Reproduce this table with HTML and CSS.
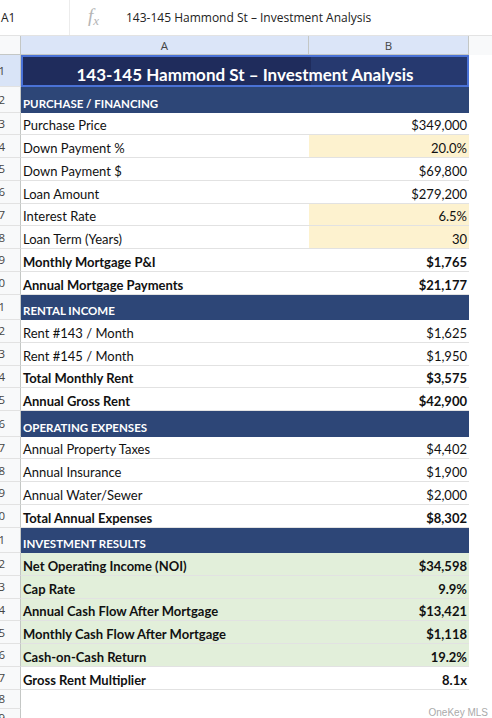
FILE: index.html
```html
<!DOCTYPE html>
<html lang="en">

<head>
    <meta charset="UTF-8">
    <meta name="viewport" content="width=device-width, initial-scale=1.0">
    <title>143-145 Hammond St – Investment Analysis</title>
    <link rel="stylesheet" href="styles.css">
</head>

<body>
    <div class="formula-bar">
        <div class="name-box">A1</div>
        <div class="fx">f<sub>x</sub></div>
        <div class="formula">143-145 Hammond St – Investment Analysis</div>
    </div>

    <div class="sheet">
        <div class="row col-head">
            <div class="num"></div>
            <div class="head sel">A</div>
            <div class="head sel">B</div>
            <div class="rest"></div>
        </div>

        <div class="row title-row">
            <div class="num sel"><span>1</span></div>
            <div class="title">143-145 Hammond St – Investment Analysis</div>
            <div class="rest"></div>
        </div>

        <div class="row section">
            <div class="num"><span>2</span></div>
            <div class="label">PURCHASE / FINANCING</div>
            <div class="value"></div>
            <div class="rest"></div>
        </div>
        <div class="row">
            <div class="num"><span>3</span></div>
            <div class="label">Purchase Price</div>
            <div class="value">$349,000</div>
            <div class="rest"></div>
        </div>
        <div class="row">
            <div class="num"><span>4</span></div>
            <div class="label">Down Payment %</div>
            <div class="value input">20.0%</div>
            <div class="rest"></div>
        </div>
        <div class="row">
            <div class="num"><span>5</span></div>
            <div class="label">Down Payment $</div>
            <div class="value">$69,800</div>
            <div class="rest"></div>
        </div>
        <div class="row">
            <div class="num"><span>6</span></div>
            <div class="label">Loan Amount</div>
            <div class="value">$279,200</div>
            <div class="rest"></div>
        </div>
        <div class="row">
            <div class="num"><span>7</span></div>
            <div class="label">Interest Rate</div>
            <div class="value input">6.5%</div>
            <div class="rest"></div>
        </div>
        <div class="row">
            <div class="num"><span>8</span></div>
            <div class="label">Loan Term (Years)</div>
            <div class="value input">30</div>
            <div class="rest"></div>
        </div>
        <div class="row bold">
            <div class="num"><span>9</span></div>
            <div class="label">Monthly Mortgage P&amp;I</div>
            <div class="value">$1,765</div>
            <div class="rest"></div>
        </div>
        <div class="row bold">
            <div class="num"><span>10</span></div>
            <div class="label">Annual Mortgage Payments</div>
            <div class="value">$21,177</div>
            <div class="rest"></div>
        </div>

        <div class="row section">
            <div class="num"><span>11</span></div>
            <div class="label">RENTAL INCOME</div>
            <div class="value"></div>
            <div class="rest"></div>
        </div>
        <div class="row">
            <div class="num"><span>12</span></div>
            <div class="label">Rent #143 / Month</div>
            <div class="value">$1,625</div>
            <div class="rest"></div>
        </div>
        <div class="row">
            <div class="num"><span>13</span></div>
            <div class="label">Rent #145 / Month</div>
            <div class="value">$1,950</div>
            <div class="rest"></div>
        </div>
        <div class="row bold">
            <div class="num"><span>14</span></div>
            <div class="label">Total Monthly Rent</div>
            <div class="value">$3,575</div>
            <div class="rest"></div>
        </div>
        <div class="row bold">
            <div class="num"><span>15</span></div>
            <div class="label">Annual Gross Rent</div>
            <div class="value">$42,900</div>
            <div class="rest"></div>
        </div>

        <div class="row section">
            <div class="num"><span>16</span></div>
            <div class="label">OPERATING EXPENSES</div>
            <div class="value"></div>
            <div class="rest"></div>
        </div>
        <div class="row">
            <div class="num"><span>17</span></div>
            <div class="label">Annual Property Taxes</div>
            <div class="value">$4,402</div>
            <div class="rest"></div>
        </div>
        <div class="row">
            <div class="num"><span>18</span></div>
            <div class="label">Annual Insurance</div>
            <div class="value">$1,900</div>
            <div class="rest"></div>
        </div>
        <div class="row">
            <div class="num"><span>19</span></div>
            <div class="label">Annual Water/Sewer</div>
            <div class="value">$2,000</div>
            <div class="rest"></div>
        </div>
        <div class="row bold">
            <div class="num"><span>20</span></div>
            <div class="label">Total Annual Expenses</div>
            <div class="value">$8,302</div>
            <div class="rest"></div>
        </div>

        <div class="row section">
            <div class="num"><span>21</span></div>
            <div class="label">INVESTMENT RESULTS</div>
            <div class="value"></div>
            <div class="rest"></div>
        </div>
        <div class="row bold result">
            <div class="num"><span>22</span></div>
            <div class="label">Net Operating Income (NOI)</div>
            <div class="value">$34,598</div>
            <div class="rest"></div>
        </div>
        <div class="row bold result">
            <div class="num"><span>23</span></div>
            <div class="label">Cap Rate</div>
            <div class="value">9.9%</div>
            <div class="rest"></div>
        </div>
        <div class="row bold result">
            <div class="num"><span>24</span></div>
            <div class="label">Annual Cash Flow After Mortgage</div>
            <div class="value">$13,421</div>
            <div class="rest"></div>
        </div>
        <div class="row bold result">
            <div class="num"><span>25</span></div>
            <div class="label">Monthly Cash Flow After Mortgage</div>
            <div class="value">$1,118</div>
            <div class="rest"></div>
        </div>
        <div class="row bold result">
            <div class="num"><span>26</span></div>
            <div class="label">Cash-on-Cash Return</div>
            <div class="value">19.2%</div>
            <div class="rest"></div>
        </div>
        <div class="row bold">
            <div class="num"><span>27</span></div>
            <div class="label">Gross Rent Multiplier</div>
            <div class="value">8.1x</div>
            <div class="rest"></div>
        </div>
        <div class="row empty">
            <div class="num"><span>28</span></div>
            <div class="label"></div>
            <div class="value"></div>
            <div class="rest"></div>
        </div>
        <div class="row empty">
            <div class="num"><span>29</span></div>
            <div class="label"></div>
            <div class="value"></div>
            <div class="rest"></div>
        </div>
    </div>

    <div class="watermark">OneKey MLS</div>
</body>

</html>
```

FILE: styles.css
```css
body {
    margin: 0;
    height: 718px;
    overflow: hidden;
    background-color: #fff;
    font-family: Lato, "Liberation Sans", sans-serif;
    color: #111;
}

/* formula bar */
.formula-bar {
    display: flex;
    align-items: center;
    height: 35px;
    border-bottom: 1px solid #e3e3e3;
    font-family: "Open Sans", sans-serif;
    font-size: 12px;
    color: #222;
}

.name-box {
    width: 68px;
    padding-left: 1px;
    align-self: stretch;
    display: flex;
    align-items: center;
    border-right: 1px solid #ececec;
}

.fx {
    width: 38px;
    padding-left: 18px;
    margin-top: -2px;
    font-family: "Liberation Serif", serif;
    font-style: italic;
    font-size: 19px;
    color: #b5b5b5;
}

.fx sub {
    font-size: 13px;
    vertical-align: -3px;
}

/* grid */
.row {
    display: grid;
    grid-template-columns: 21px 288px 160px 1fr;
    height: 22.75px;
}

.row > div {
    border-bottom: 1px solid #e2e2e2;
    box-sizing: border-box;
}

.num {
    display: flex;
    justify-content: flex-end;
    align-items: center;
    padding-right: 15px;
    overflow: hidden;
    background-color: #f8f9fa;
    border-right: 1px solid #c4c7c5;
    font-family: "Open Sans", sans-serif;
    font-size: 11.5px;
    color: #444;
}

.num.sel {
    background-color: #d9e4f7;
}

.col-head {
    height: 19px;
}

.col-head > div {
    border-bottom: 1px solid #c4c7c5;
}

.head {
    display: flex;
    align-items: center;
    justify-content: center;
    font-family: "Open Sans", sans-serif;
    font-size: 11.5px;
    color: #444;
    border-right: 1px solid #c4c7c5;
}

.head.sel {
    background-color: #dbe5f8;
}

.col-head .rest {
    background-color: #f8f9fa;
}

.label {
    display: flex;
    align-items: flex-end;
    padding: 0 0 1px 2px;
    font-size: 13px;
    white-space: nowrap;
}

.value {
    display: flex;
    align-items: flex-end;
    justify-content: flex-end;
    padding: 0 2px 1px 0;
    font-size: 13px;
}

.value.input {
    background-color: #fdf2cf;
}

.bold .label,
.bold .value {
    font-weight: bold;
}

.result .label,
.result .value {
    background-color: #e2efda;
}

.row .rest {
    border-bottom: none;
}

/* title row */
.title-row {
    height: 32px;
}

.title {
    grid-column: span 2;
    display: flex;
    align-items: flex-end;
    justify-content: center;
    padding-bottom: 0;
    background: linear-gradient(to right, #1f2c5c 288px, #26396f 288px);
    border: 2px solid #4a72d6 !important;
    color: #fff;
    font-size: 17px;
    font-weight: bold;
}

/* section headers */
.section {
    height: 25.5px;
}

.section .label,
.section .value {
    background-color: #2d4677;
    border-bottom-color: #2d4677;
}

.section .label {
    padding-bottom: 2px;
    color: #fff;
    font-size: 11.5px;
    font-weight: bold;
}

.empty {
    height: 19px;
}

.empty .label,
.empty .value {
    border-bottom: none;
}

.watermark {
    position: absolute;
    right: 4px;
    bottom: 0;
    font-family: "Liberation Sans", sans-serif;
    font-size: 10px;
    color: #aaa;
}
```
